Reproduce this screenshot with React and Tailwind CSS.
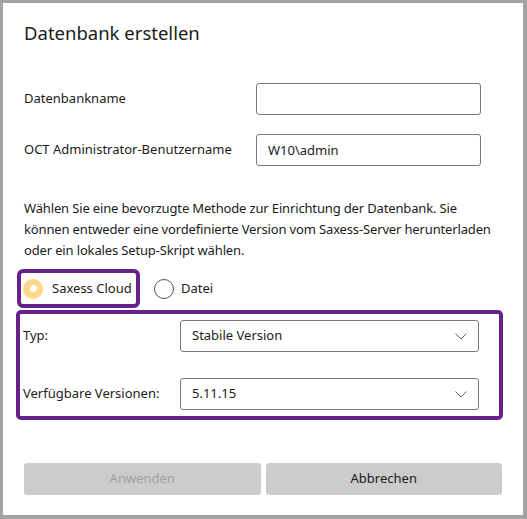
import React, { useState } from "react";

const font = { fontFamily: '"Segoe UI", "Noto Sans", sans-serif' };

function Chevron() {
  return (
    <svg width="12" height="7" viewBox="0 0 12 7" className="shrink-0">
      <path d="M0.5 0.5 L6 6 L11.5 0.5" fill="none" stroke="#5f5f5f" strokeWidth="1" />
    </svg>
  );
}

function Select({ value }) {
  return (
    <div className="flex items-center justify-between w-[299px] h-[32px] border border-[#7a7a7a] rounded-[3px] pl-[11px] pr-[11px] bg-white">
      <span className="text-[13px] text-[#1b1b1b] whitespace-nowrap">{value}</span>
      <Chevron />
    </div>
  );
}

export default function App() {
  const [method, setMethod] = useState("cloud");

  return (
    <div
      className="w-[527px] h-[519px] bg-white border-l-[3px] border-t-[3px] border-r-4 border-b-4 border-[#a3a3a3] px-[21px] pt-[16px] text-[#1b1b1b]"
      style={font}
    >
      <h1 className="h-[28px] leading-[28px] text-[18.5px] font-normal">Datenbank erstellen</h1>

      <div className="mt-[36px] flex items-center h-[32px]">
        <label className="w-[232px] text-[13px]">Datenbankname</label>
        <input className="w-[225px] h-[32px] border border-[#7a7a7a] rounded-[3px] px-[11px] text-[13px] outline-none" />
      </div>

      <div className="mt-[19px] flex items-center h-[32px]">
        <label className="w-[232px] text-[13px] whitespace-nowrap">OCT Administrator-Benutzername</label>
        <input
          defaultValue="W10\admin"
          className="w-[225px] h-[32px] border border-[#7a7a7a] rounded-[3px] px-[11px] text-[13px] outline-none"
        />
      </div>

      <p className="mt-[32px] text-[13px] leading-[21px] tracking-[-0.15px] whitespace-nowrap">
        Wählen Sie eine bevorzugte Methode zur Einrichtung der Datenbank. Sie
        <br />
        können entweder eine vordefinierte Version vom Saxess-Server herunterladen
        <br />
        oder ein lokales Setup-Skript wählen.
      </p>

      <div className="mt-[8px] flex items-center">
        <button
          onClick={() => setMethod("cloud")}
          className="-ml-[7px] w-[123px] h-[39px] border-4 border-[#66228a] rounded-[6px] flex items-center pl-[2px]"
        >
          <span className="w-[20px] h-[20px] rounded-full bg-[#fcd888] flex items-center justify-center">
            <span className="w-[7px] h-[7px] rounded-full bg-white" />
          </span>
          <span className="ml-[9px] text-[13px] whitespace-nowrap">Saxess Cloud</span>
        </button>
        <button onClick={() => setMethod("file")} className="ml-[14px] flex items-center">
          <span className="w-[20px] h-[20px] rounded-full border border-[#555555] bg-white" />
          <span className="ml-[7px] text-[13px]">Datei</span>
        </button>
      </div>

      <div className="mt-[2px] -ml-[8px] w-[487px] h-[110px] border-4 border-[#66228a] rounded-[5px] pl-[3px] pt-[6px] flex flex-col gap-[26px]">
        <div className="flex items-center">
          <span className="w-[157px] text-[13px] whitespace-nowrap">Typ:</span>
          <Select value="Stabile Version" />
        </div>
        <div className="flex items-center">
          <span className="w-[157px] text-[13px] whitespace-nowrap">Verfügbare Versionen:</span>
          <Select value="5.11.15" />
        </div>
      </div>

      <div className="mt-[43px] flex gap-[5px]">
        <button disabled className="flex-1 h-[32px] bg-[#cccccc] rounded-[3px] text-[13px] text-[#a0a0a0]">
          Anwenden
        </button>
        <button className="flex-1 h-[32px] bg-[#cccccc] rounded-[3px] text-[13px] text-[#1b1b1b]">
          Abbrechen
        </button>
      </div>
    </div>
  );
}
